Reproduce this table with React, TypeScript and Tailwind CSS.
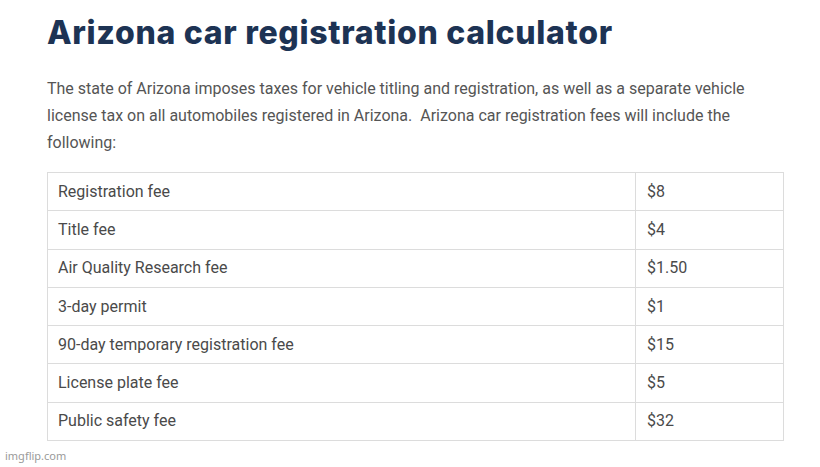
const ROWS: [string, string][] = [
  ["Registration fee", "$8"],
  ["Title fee", "$4"],
  ["Air Quality Research fee", "$1.50"],
  ["3-day permit", "$1"],
  ["90-day temporary registration fee", "$15"],
  ["License plate fee", "$5"],
  ["Public safety fee", "$32"],
];

export default function App() {
  return (
    <div className="relative w-[820px] h-[467px] bg-white overflow-hidden">
      <div className="pl-[47px] pr-[37px] pt-[13px]">
        <h1 className="text-[32px] leading-[40px] font-extrabold text-[#1d3354] tracking-[0.7px] [font-family:Inter,sans-serif]">
          Arizona car registration calculator
        </h1>

        <p className="mt-[22px] text-[16px] leading-[27px] text-[#555] [font-family:Roboto,sans-serif]">
          The state of Arizona imposes taxes for vehicle titling and registration, as well as a separate vehicle
          license tax on all automobiles registered in Arizona.&nbsp; Arizona car registration fees will include the
          following:
        </p>

        <table className="mt-[16px] w-[737px] border-collapse text-[16px] text-[#4a4a4a] [font-family:Roboto,sans-serif]">
          <tbody>
            {ROWS.map(([label, fee]) => (
              <tr key={label} className="h-[38.3px]">
                <td className="border border-[#dcdcdc] pl-[10px] w-[588px]">{label}</td>
                <td className="border border-[#dcdcdc] pl-[11px]">{fee}</td>
              </tr>
            ))}
          </tbody>
        </table>
      </div>

      <span className="absolute left-[5px] bottom-[3px] text-[11px] text-[#9a9a9a] [font-family:Arial,'Liberation Sans',sans-serif]">
        imgflip.com
      </span>
    </div>
  );
}
